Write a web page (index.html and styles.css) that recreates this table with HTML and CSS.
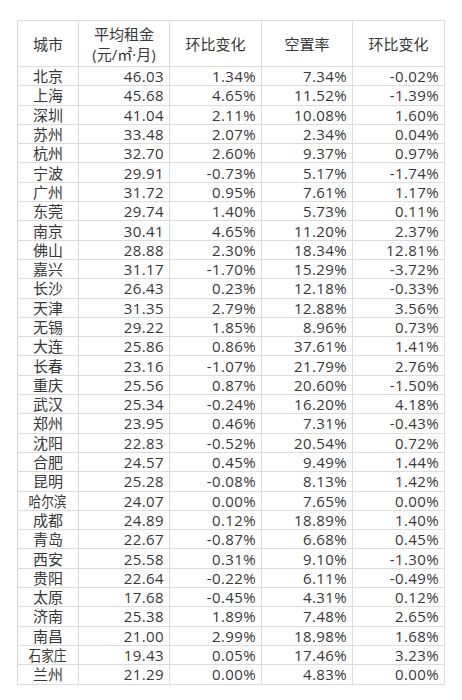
FILE: index.html
```html
<!DOCTYPE html>
<html lang="zh-CN">
<head>
<meta charset="utf-8">
<title>城市租金</title>
<link rel="stylesheet" href="styles.css">
</head>
<body>
<div class="page">
<table class="rent">
<colgroup>
<col class="c-city"><col class="c-rent"><col class="c-chg"><col class="c-vac"><col class="c-chg2">
</colgroup>
<thead>
<tr><th>城市</th><th>平均租金<br>(元/㎡·月)</th><th>环比变化</th><th>空置率</th><th>环比变化</th></tr>
</thead>
<tbody>
<tr><td>北京</td><td>46.03</td><td>1.34%</td><td>7.34%</td><td>-0.02%</td></tr>
<tr><td>上海</td><td>45.68</td><td>4.65%</td><td>11.52%</td><td>-1.39%</td></tr>
<tr><td>深圳</td><td>41.04</td><td>2.11%</td><td>10.08%</td><td>1.60%</td></tr>
<tr><td>苏州</td><td>33.48</td><td>2.07%</td><td>2.34%</td><td>0.04%</td></tr>
<tr><td>杭州</td><td>32.70</td><td>2.60%</td><td>9.37%</td><td>0.97%</td></tr>
<tr><td>宁波</td><td>29.91</td><td>-0.73%</td><td>5.17%</td><td>-1.74%</td></tr>
<tr><td>广州</td><td>31.72</td><td>0.95%</td><td>7.61%</td><td>1.17%</td></tr>
<tr><td>东莞</td><td>29.74</td><td>1.40%</td><td>5.73%</td><td>0.11%</td></tr>
<tr><td>南京</td><td>30.41</td><td>4.65%</td><td>11.20%</td><td>2.37%</td></tr>
<tr><td>佛山</td><td>28.88</td><td>2.30%</td><td>18.34%</td><td>12.81%</td></tr>
<tr><td>嘉兴</td><td>31.17</td><td>-1.70%</td><td>15.29%</td><td>-3.72%</td></tr>
<tr><td>长沙</td><td>26.43</td><td>0.23%</td><td>12.18%</td><td>-0.33%</td></tr>
<tr><td>天津</td><td>31.35</td><td>2.79%</td><td>12.88%</td><td>3.56%</td></tr>
<tr><td>无锡</td><td>29.22</td><td>1.85%</td><td>8.96%</td><td>0.73%</td></tr>
<tr><td>大连</td><td>25.86</td><td>0.86%</td><td>37.61%</td><td>1.41%</td></tr>
<tr><td>长春</td><td>23.16</td><td>-1.07%</td><td>21.79%</td><td>2.76%</td></tr>
<tr><td>重庆</td><td>25.56</td><td>0.87%</td><td>20.60%</td><td>-1.50%</td></tr>
<tr><td>武汉</td><td>25.34</td><td>-0.24%</td><td>16.20%</td><td>4.18%</td></tr>
<tr><td>郑州</td><td>23.95</td><td>0.46%</td><td>7.31%</td><td>-0.43%</td></tr>
<tr><td>沈阳</td><td>22.83</td><td>-0.52%</td><td>20.54%</td><td>0.72%</td></tr>
<tr><td>合肥</td><td>24.57</td><td>0.45%</td><td>9.49%</td><td>1.44%</td></tr>
<tr><td>昆明</td><td>25.28</td><td>-0.08%</td><td>8.13%</td><td>1.42%</td></tr>
<tr><td><span class="squeeze">哈尔滨</span></td><td>24.07</td><td>0.00%</td><td>7.65%</td><td>0.00%</td></tr>
<tr><td>成都</td><td>24.89</td><td>0.12%</td><td>18.89%</td><td>1.40%</td></tr>
<tr><td>青岛</td><td>22.67</td><td>-0.87%</td><td>6.68%</td><td>0.45%</td></tr>
<tr><td>西安</td><td>25.58</td><td>0.31%</td><td>9.10%</td><td>-1.30%</td></tr>
<tr><td>贵阳</td><td>22.64</td><td>-0.22%</td><td>6.11%</td><td>-0.49%</td></tr>
<tr><td>太原</td><td>17.68</td><td>-0.45%</td><td>4.31%</td><td>0.12%</td></tr>
<tr><td>济南</td><td>25.38</td><td>1.89%</td><td>7.48%</td><td>2.65%</td></tr>
<tr><td>南昌</td><td>21.00</td><td>2.99%</td><td>18.98%</td><td>1.68%</td></tr>
<tr><td><span class="squeeze">石家庄</span></td><td>19.43</td><td>0.05%</td><td>17.46%</td><td>3.23%</td></tr>
<tr><td>兰州</td><td>21.29</td><td>0.00%</td><td>4.83%</td><td>0.00%</td></tr>
</tbody>
</table>
</div>
</body>
</html>
```
FILE: styles.css
```css
html, body {
  margin: 0;
  background: #fff;
}
.page {
  padding: 20px 0 0 17px;
}
.rent {
  border-collapse: collapse;
  table-layout: fixed;
  width: 427px;
  font-family: "Open Sans", "Noto Sans CJK SC", sans-serif;
  font-size: 15px;
  color: #383838;
}
.c-city { width: 61px; }
.c-rent { width: 91px; }
.c-chg { width: 92px; }
.c-vac { width: 91px; }
.c-chg2 { width: 92px; }
.rent th, .rent td {
  border: 1px solid #dcdcdc;
  padding: 0 5px;
}
.rent th {
  height: 45px;
  font-weight: normal;
  text-align: center;
  line-height: 20px;
  font-family: "Open Sans", "Noto Sans CJK SC", sans-serif;
}
.rent td {
  height: 18.3px;
  line-height: 18px;
  text-align: right;
  white-space: nowrap;
  letter-spacing: 0.4px;
}
.rent td:first-child {
  text-align: center;
  font-family: "Noto Sans CJK SC", sans-serif;
  padding: 0;
  letter-spacing: 0;
}
.squeeze {
  display: inline-block;
  transform: scaleX(0.84);
}
```
